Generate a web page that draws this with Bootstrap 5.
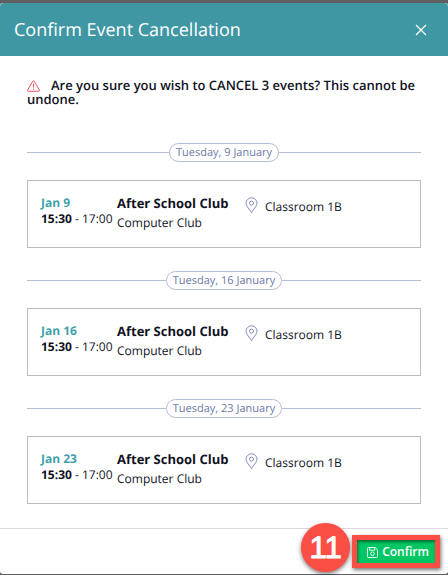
<!DOCTYPE html>
<html lang="en">
<head>
<meta charset="utf-8">
<meta name="viewport" content="width=device-width, initial-scale=1">
<title>Confirm Event Cancellation</title>
<link href="https://cdn.jsdelivr.net/npm/bootstrap@5.3.0/dist/css/bootstrap.min.css" rel="stylesheet">
<style>
  body { font-family: "Open Sans", "Noto Sans", sans-serif; font-size: 12px; line-height: 16px; color: #10131f; background: #5f5f5f; text-rendering: geometricPrecision; }
  .dialog-shell { min-height: 100vh; padding: 3px 0 1px; }
  .dialog-panel { border-radius: 3px; }
  .dialog-head { background: #3f97a3; height: 53px; padding: 0 14px; }
  .dialog-title { font-size: 18px; line-height: 24px; font-weight: 500; }
  .dialog-close { width: 26px; height: 26px; }
  .dialog-main { padding: 22px 27px; }
  .warning-text { font-size: 13px; line-height: 14px; margin-bottom: 37px; font-weight: 600; }
  .warning-text svg { margin-right: 11px; vertical-align: -2px; }
  .day-divider { margin-bottom: 18px; }
  .day-line { height: 1px; background: #b4bdd6; }
  .day-pill { border: 1px solid #b4bdd6; font-size: 11px; line-height: 17px; padding: 0 6px; color: #6b7ba4; font-weight: 500; }
  .event-box { border: 1px solid #bbbbbb; min-height: 68px; padding: 13px; }
  .event-item + .event-item { margin-top: 23px; }
  .event-when { width: 76px; padding-top: 1px; }
  .event-day { color: #3f9fab; }
  .event-what { width: 128px; line-height: 19px; }
  .event-name { font-size: 13px; }
  .event-where { gap: 7px; padding-top: 3px; }
  .event-where span { padding-top: 2px; }
  .dialog-foot { border-top: 1px solid #dbdbdb; padding: 4px 8px 4px 0; height: 46px; }
  .step-badge { width: 49px; height: 49px; background: #fb4f46; font: 31px/49px "Liberation Sans", Arial, sans-serif; -webkit-text-stroke: 1px #fff; box-shadow: 0 2px 4px rgba(0,0,0,.5); margin: -10px 2px 0 0; }
  .confirm-frame { border: 5px solid #fb4f46; box-shadow: 1px 2px 4px rgba(0,0,0,.55); margin-top: 2px; }
  .confirm-btn { background: #00c763; font-size: 12px; line-height: 16px; padding: 4px 6px 3px 10px; gap: 4px; font-weight: 600; box-shadow: inset 1px 2px 3px rgba(0,0,0,.45); }
</style>
<script src="https://cdn.jsdelivr.net/npm/bootstrap@5.3.0/dist/js/bootstrap.bundle.min.js"></script>
</head>
<body>
<svg class="d-none" aria-hidden="true">
  <symbol id="pin" viewBox="0 0 13 17"><g fill="none" stroke="#8290b8"><path d="M6.5 15.7C5 12.500 1 9.500 1 6.300a5.500 5.500 0 0 1 11 0c0 3.200-4 6.200-5.500 9.400z"/><circle cx="6.500" cy="6.200" r="2"/></g></symbol>
</svg>
<div class="dialog-shell d-flex flex-column">
  <div class="dialog-panel bg-white flex-grow-1 d-flex flex-column" role="dialog" aria-labelledby="dialogTitle">
    <header class="dialog-head d-flex align-items-center justify-content-between text-white rounded-top-1">
      <h1 class="dialog-title mb-0" id="dialogTitle">Confirm Event Cancellation</h1>
      <button type="button" class="dialog-close btn p-0 border-0 text-white d-flex align-items-center justify-content-center" aria-label="Close">
        <svg width="12" height="12" viewBox="0 0 12 12" stroke="currentColor" stroke-width="1.2"><path d="M1 1l10 10M11 1L1 11"/></svg>
      </button>
    </header>
    <main class="dialog-main flex-grow-1">
      <p class="warning-text"><svg width="13" height="12" viewBox="0 0 13 12" fill="none" stroke="#f4565b" stroke-linejoin="round" aria-hidden="true"><path d="M5.800 1.100Q6.500 0 7.200 1.100L12.300 10Q12.700 11.300 11.500 11.300H1.500Q.3 11.300.7 10z"/><path d="M6.500 3.800v3.700M6.500 8.700v1"/></svg>Are you sure you wish to CANCEL 3 events? This cannot be undone.</p>

      <section class="event-item">
        <div class="day-divider d-flex align-items-center"><span class="day-line flex-grow-1"></span><span class="day-pill rounded-pill">Tuesday, 9 January</span><span class="day-line flex-grow-1"></span></div>
        <div class="event-box d-flex">
          <div class="event-when text-nowrap"><div class="event-day fw-bold">Jan 9</div><div><b>15:30</b> - 17:00</div></div>
          <div class="event-what"><div class="event-name fw-bold">After School Club</div><div>Computer Club</div></div>
          <div class="event-where d-flex align-items-start"><svg width="13" height="17" aria-hidden="true"><use href="#pin"/></svg><span>Classroom 1B</span></div>
        </div>
      </section>

      <section class="event-item">
        <div class="day-divider d-flex align-items-center"><span class="day-line flex-grow-1"></span><span class="day-pill rounded-pill">Tuesday, 16 January</span><span class="day-line flex-grow-1"></span></div>
        <div class="event-box d-flex">
          <div class="event-when text-nowrap"><div class="event-day fw-bold">Jan 16</div><div><b>15:30</b> - 17:00</div></div>
          <div class="event-what"><div class="event-name fw-bold">After School Club</div><div>Computer Club</div></div>
          <div class="event-where d-flex align-items-start"><svg width="13" height="17" aria-hidden="true"><use href="#pin"/></svg><span>Classroom 1B</span></div>
        </div>
      </section>

      <section class="event-item">
        <div class="day-divider d-flex align-items-center"><span class="day-line flex-grow-1"></span><span class="day-pill rounded-pill">Tuesday, 23 January</span><span class="day-line flex-grow-1"></span></div>
        <div class="event-box d-flex">
          <div class="event-when text-nowrap"><div class="event-day fw-bold">Jan 23</div><div><b>15:30</b> - 17:00</div></div>
          <div class="event-what"><div class="event-name fw-bold">After School Club</div><div>Computer Club</div></div>
          <div class="event-where d-flex align-items-start"><svg width="13" height="17" aria-hidden="true"><use href="#pin"/></svg><span>Classroom 1B</span></div>
        </div>
      </section>
    </main>
    <footer class="dialog-foot d-flex justify-content-end align-items-start">
      <span class="step-badge rounded-circle text-white text-center">11</span>
      <div class="confirm-frame">
        <button type="button" class="confirm-btn btn rounded-0 border-0 text-white d-flex align-items-center">
          <svg width="11" height="11" viewBox="0 0 11 11" fill="none" stroke="currentColor" stroke-width=".9" aria-hidden="true"><path d="M1.500.5h6.700l2.300 2.300v6.700a1 1 0 0 1-1 1h-8a1 1 0 0 1-1-1v-8a1 1 0 0 1 1-1zM2.700.5v2.700h5V.5"/><circle cx="5.500" cy="6.700" r="1.800"/></svg>
          Confirm
        </button>
      </div>
    </footer>
  </div>
</div>
</body>
</html>
